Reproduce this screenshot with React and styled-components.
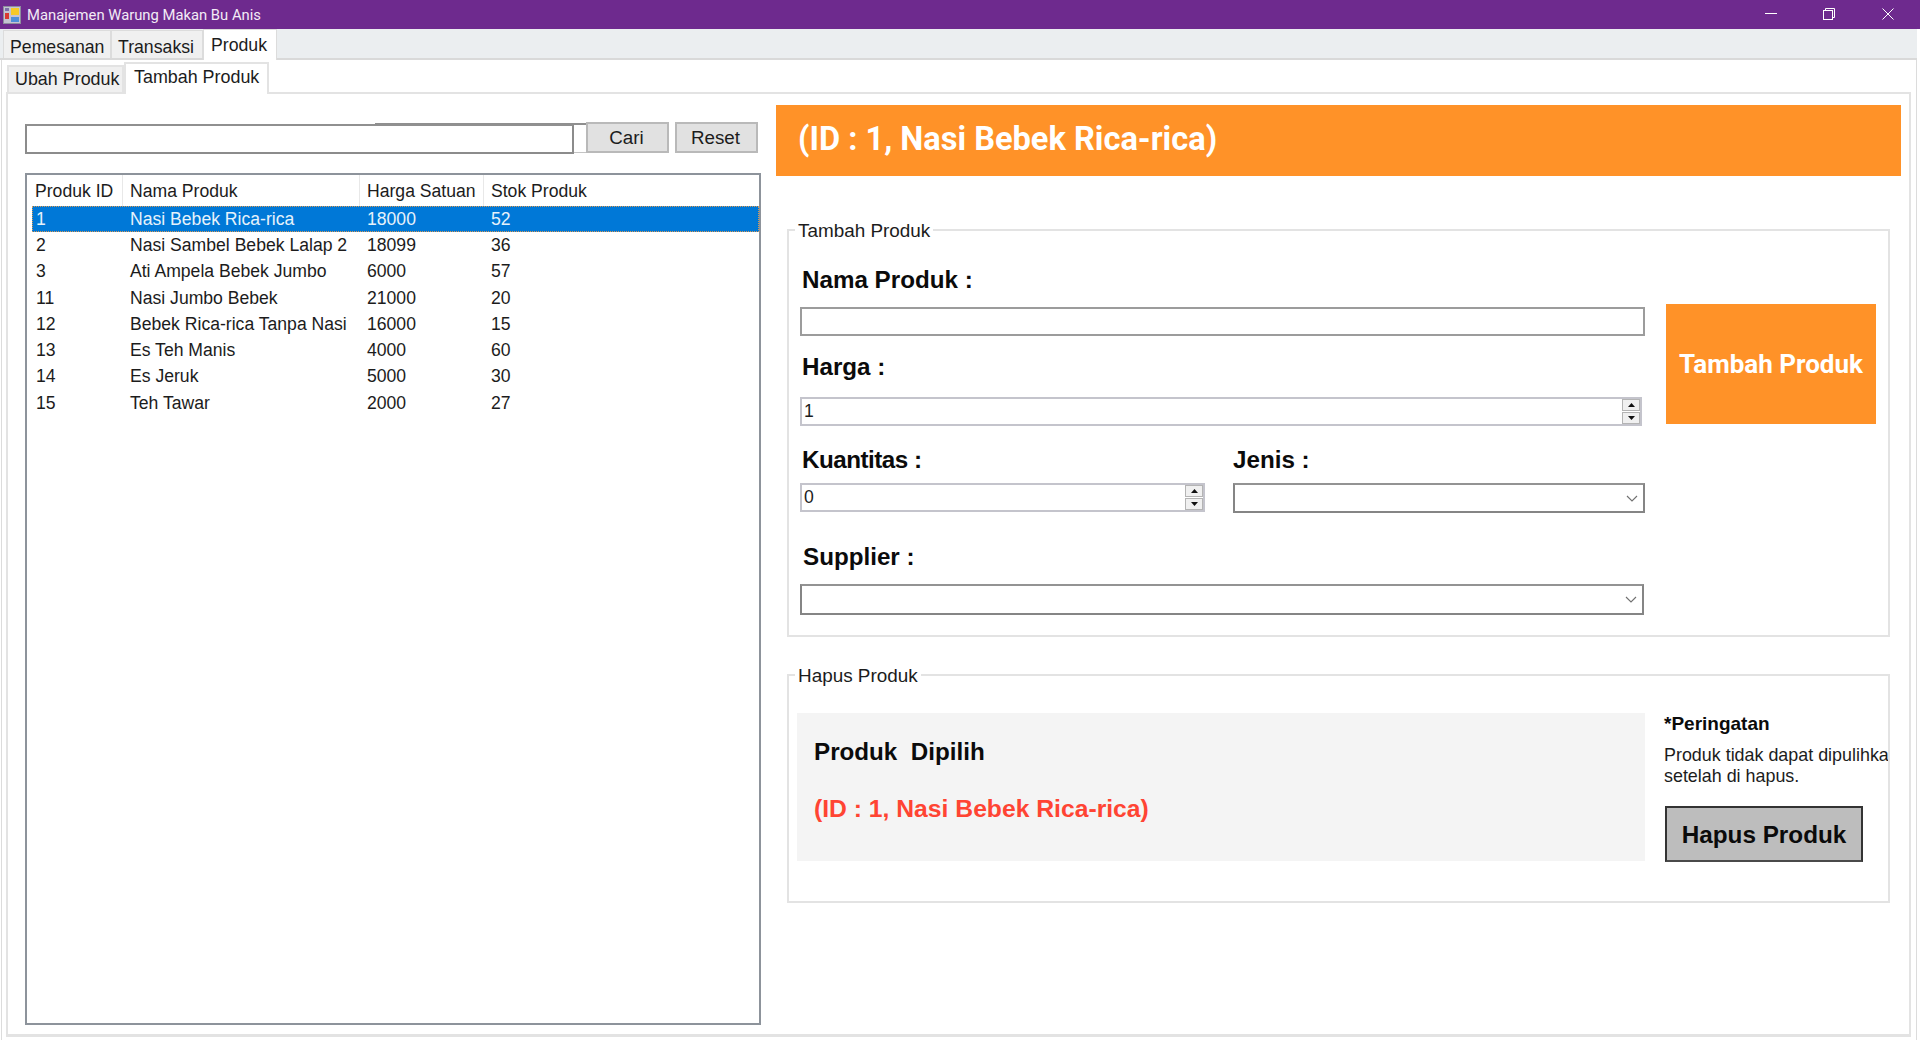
import React from "react";
import styled, { createGlobalStyle } from "styled-components";

const GlobalStyle = createGlobalStyle`
  html, body {
    margin: 0;
    padding: 0;
    background: #fff;
  }
  * {
    box-sizing: border-box;
  }
`;

const products = [
  { id: 1, name: "Nasi Bebek Rica-rica", price: 18000, stock: 52 },
  { id: 2, name: "Nasi Sambel Bebek Lalap 2", price: 18099, stock: 36 },
  { id: 3, name: "Ati Ampela Bebek Jumbo", price: 6000, stock: 57 },
  { id: 11, name: "Nasi Jumbo Bebek", price: 21000, stock: 20 },
  { id: 12, name: "Bebek Rica-rica Tanpa Nasi", price: 16000, stock: 15 },
  { id: 13, name: "Es Teh Manis", price: 4000, stock: 60 },
  { id: 14, name: "Es Jeruk", price: 5000, stock: 30 },
  { id: 15, name: "Teh Tawar", price: 2000, stock: 27 },
];

const Page = styled.div`
  width: 1920px;
  height: 1040px;
  overflow: hidden;
  display: flex;
  flex-direction: column;
  background: #fff;
  font-family: "Liberation Sans", Arial, sans-serif;
  color: #1c1c1c;
`;

const TitleBar = styled.div`
  height: 29px;
  flex: none;
  display: flex;
  align-items: center;
  background: #6e2a8e;
  color: #f3ebf6;
  padding-left: 3px;
`;

const TitleText = styled.span`
  margin-left: 6px;
  font-family: Roboto, sans-serif;
  font-size: 14.8px;
`;

const WindowButtons = styled.div`
  margin-left: auto;
  display: flex;
  align-items: center;
  padding: 0 26px 1px 0;
  height: 100%;
`;

const WindowIcon = styled.span`
  display: flex;
  margin-left: ${(p) => p.$gap || 0}px;
`;

const OuterStrip = styled.div`
  height: 31px;
  flex: none;
  display: flex;
  align-items: flex-end;
  padding-left: 3px;
  background: #ebeef0;
  border-bottom: 2px solid #d9d9d9;
  margin-right: 3px;
`;

const OuterTab = styled.div`
  height: ${(p) => (p.$active ? "31px" : "28px")};
  width: ${(p) => p.$width}px;
  margin-bottom: ${(p) => (p.$active ? "-2px" : "0")};
  padding-top: ${(p) => (p.$active ? "5px" : "6px")};
  padding-left: ${(p) => (p.$active ? "7px" : "6px")};
  background: ${(p) => (p.$active ? "#fff" : "#f0f0f0")};
  border: 1px solid #dcdcdc;
  border-bottom: none;
  font-size: 17.7px;
  line-height: 20px;
  white-space: nowrap;
`;

const OuterPanel = styled.div`
  flex: 1;
  min-height: 0;
  display: flex;
  flex-direction: column;
  margin: 0 3px 0 1px;
  padding: 1px 5px 3px 4px;
  border-left: 1px solid #dcdcdc;
  border-right: 1px solid #dcdcdc;
`;

const InnerStrip = styled.div`
  height: 31px;
  flex: none;
  display: flex;
  align-items: flex-end;
  padding-left: 1px;
`;

const InnerTab = styled.div`
  height: ${(p) => (p.$active ? "32px" : "27px")};
  width: ${(p) => p.$width}px;
  margin-bottom: ${(p) => (p.$active ? "-2px" : "0")};
  padding-top: ${(p) => (p.$active ? "3px" : "2px")};
  padding-left: ${(p) => (p.$active ? "8px" : "6px")};
  background: ${(p) => (p.$active ? "#fff" : "#f0f0f0")};
  border: 2px solid #e3e3e3;
  border-bottom: none;
  position: relative;
  font-size: 17.9px;
  line-height: 20px;
  white-space: nowrap;
`;

const InnerPanel = styled.div`
  flex: 1;
  min-height: 0;
  display: grid;
  grid-template-columns: 736px 1125px;
  column-gap: 15px;
  padding: 11px 0 0 17px;
  border: 2px solid #e3e3e3;
  border-bottom-width: 3px;
`;

const LeftColumn = styled.div`
  padding-top: 17px;
  display: flex;
  flex-direction: column;
`;

const SearchRow = styled.div`
  height: 32px;
  display: flex;
  align-items: flex-start;
  isolation: isolate;
`;

const SearchBox = styled.div`
  position: relative;
  width: 549px;
  height: 30px;
  margin-top: 2px;
  margin-right: 12px;
  background: #fff;
  border: 2px solid #8c8c8c;
  border-top-color: #909090;
`;

const HiddenSearch = styled.div`
  position: absolute;
  left: 348px;
  top: -3px;
  width: 212px;
  height: 30px;
  border: 1px solid #c4c4c4;
  border-top: 2px solid #8f8f8f;
  border-left: none;
  z-index: -1;
`;

const SearchButton = styled.button`
  width: 83px;
  height: 31px;
  margin-right: ${(p) => p.$gap || 0}px;
  padding: 1px 2px 0 0;
  background: #e1e1e1;
  border: 2px solid #b9b9b9;
  font-family: inherit;
  font-size: 18.8px;
  color: #1c1c1c;
`;

const DataGrid = styled.div`
  height: 852px;
  margin-top: 19px;
  background: #fff;
  border: 2px solid #8d939b;
  padding-left: 5px;
`;

const GridRow = styled.div`
  display: grid;
  grid-template-columns: 90px 237px 124px 276px;
  width: 727px;
  height: ${(p) => (p.$header ? "31px" : "26.3px")};
  align-items: center;
  font-size: 17.6px;
  background: ${(p) => (p.$selected ? "#0078d7" : "transparent")};
  color: ${(p) => (p.$selected ? "#e6f2fb" : "inherit")};
  outline: ${(p) => (p.$selected ? "1px dotted #d99a55" : "none")};
  outline-offset: -1px;
`;

const HeaderCell = styled.div`
  height: 100%;
  display: flex;
  align-items: center;
  padding: 1px 0 0 ${(p) => (p.$first ? "3px" : "7px")};
  border-left: ${(p) => (p.$first ? "none" : "1px solid #e8e8e8")};
`;

const Cell = styled.div`
  padding-left: ${(p) => (p.$first ? "4px" : "8px")};
  white-space: nowrap;
`;

const RightColumn = styled.div`
  display: flex;
  flex-direction: column;
`;

const Banner = styled.div`
  height: 71px;
  flex: none;
  display: flex;
  align-items: center;
  padding: 0 0 3px 22px;
  background: #ff9228;
  color: #fff;
  font-family: Roboto, sans-serif;
  font-weight: 700;
  font-size: 32.6px;
`;

const Group = styled.section`
  position: relative;
  flex: none;
  width: 1103px;
  height: ${(p) => p.$height}px;
  margin: ${(p) => p.$top}px 0 0 11px;
  border: 2px solid #e3e3e3;
`;

const GroupLegend = styled.span`
  position: absolute;
  left: 6px;
  top: -11px;
  padding: 0 3px;
  background: #fff;
  font-size: 18.9px;
  line-height: 21px;
`;

const AddLayout = styled.div`
  display: grid;
  grid-template-columns: 845px 210px;
  column-gap: 21px;
  padding: 32px 0 0 11px;
`;

const FieldLabel = styled.div`
  height: 34px;
  margin-top: ${(p) => p.$top || 0}px;
  padding-left: ${(p) => p.$indent ?? 2}px;
  font-size: 24.2px;
  font-weight: 700;
  line-height: 34px;
  letter-spacing: ${(p) => p.$spacing || 0}px;
  color: #0b0b0b;
`;

const TextBox = styled.div`
  height: ${(p) => p.$height || 29}px;
  width: ${(p) => p.$width || 845}px;
  margin-top: ${(p) => p.$top || 0}px;
  background: #fff;
  border: 2px solid #9c9c9c;
`;

const SpinBox = styled.div`
  height: 29px;
  width: ${(p) => p.$width}px;
  margin-top: ${(p) => p.$top || 0}px;
  display: flex;
  align-items: center;
  justify-content: space-between;
  padding-left: 2px;
  background: #fff;
  border: 2px solid #c4c4cc;
  font-size: 17.6px;
`;

const SpinButtons = styled.div`
  display: flex;
  flex-direction: column;
  width: 18px;
  gap: 1px;
`;

const SpinButton = styled.div`
  height: 12px;
  display: flex;
  align-items: center;
  justify-content: center;
  background: #f0f0f0;
  border: 1px solid #b4b4b4;
`;

const ComboBox = styled.div`
  height: ${(p) => p.$height}px;
  width: ${(p) => p.$width}px;
  margin-top: ${(p) => p.$top || 0}px;
  display: flex;
  align-items: center;
  justify-content: flex-end;
  padding-right: 5px;
  background: #fff;
  border: 2px solid #858585;
  border-top-color: #939393;
`;

const TwoFields = styled.div`
  display: grid;
  grid-template-columns: 405px 412px;
  column-gap: 28px;
  margin-top: 17px;
`;

const AddButton = styled.button`
  width: 210px;
  height: 120px;
  margin-top: 41px;
  padding: 0;
  background: #ff9228;
  border: none;
  color: #fff;
  font-family: Roboto, sans-serif;
  font-weight: 700;
  font-size: 26px;
`;

const DeleteLayout = styled.div`
  display: flex;
  padding: 37px 0 0 8px;
  height: 100%;
`;

const SelectedPanel = styled.div`
  width: 848px;
  height: 148px;
  flex: none;
  padding: 22px 0 0 17px;
  background: #f4f4f4;
`;

const SelectedTitle = styled.div`
  font-size: 24.2px;
  font-weight: 700;
  line-height: 34px;
  color: #0b0b0b;
`;

const SelectedName = styled.div`
  margin-top: 23px;
  font-size: 24.7px;
  font-weight: 700;
  line-height: 34px;
  color: #ff4433;
`;

const WarningColumn = styled.div`
  flex: 1;
  min-width: 0;
  overflow: hidden;
  padding: 0 0 0 19px;
`;

const WarningTitle = styled.div`
  font-size: 19px;
  font-weight: 700;
  line-height: 22px;
  color: #0b0b0b;
`;

const WarningText = styled.div`
  margin-top: 10px;
  font-size: 17.9px;
  line-height: 21px;
  white-space: nowrap;
`;

const DeleteButton = styled.button`
  display: block;
  width: 198px;
  height: 56px;
  margin: 19px 0 0 1px;
  padding: 1px 0 0;
  background: #bdbdbd;
  border: 2px solid #333;
  border-bottom-color: #4a4a4a;
  font-family: inherit;
  font-weight: 700;
  font-size: 24.3px;
  color: #0b0b0b;
`;

const AppIcon = () => (
  <svg width="18" height="18" viewBox="0 0 18 18">
    <rect x="0" y="0" width="18" height="18" fill="#8d8d9d" />
    <rect x="1" y="1" width="16" height="16" fill="#c4c4d2" />
    <rect x="2" y="2" width="4" height="3" fill="#7c6fa8" />
    <rect x="2" y="7" width="4" height="6" fill="#d8392f" />
    <rect x="8" y="2" width="8" height="7" fill="#f6c927" />
    <rect x="8" y="11" width="8" height="5" fill="#4f8fd8" />
  </svg>
);

const MinimizeIcon = () => (
  <svg width="12" height="12" viewBox="0 0 12 12">
    <path d="M0 5.5H12" stroke="#fff" strokeWidth="1" />
  </svg>
);

const RestoreIcon = () => (
  <svg width="12" height="12" viewBox="0 0 12 12" fill="none">
    <rect x="0.5" y="2.5" width="9" height="9" stroke="#fff" />
    <path d="M2.5 2.5V0.5H11.5V9.5H9.5" stroke="#fff" />
  </svg>
);

const CloseIcon = () => (
  <svg width="12" height="12" viewBox="0 0 12 12">
    <path d="M0.5 0.5L11.5 11.5M11.5 0.5L0.5 11.5" stroke="#fff" strokeWidth="1" />
  </svg>
);

const Arrow = ({ down }) => (
  <svg width="7" height="4" viewBox="0 0 7 4">
    <path d={down ? "M0 0H7L3.5 4Z" : "M3.5 0L7 4H0Z"} fill="#111" />
  </svg>
);

const Chevron = () => (
  <svg width="12" height="7" viewBox="0 0 12 7" fill="none">
    <path d="M1 1L6 6L11 1" stroke="#707070" strokeWidth="1.1" />
  </svg>
);

const Spin = ({ value, width, top }) => (
  <SpinBox $width={width} $top={top}>
    <span>{value}</span>
    <SpinButtons>
      <SpinButton>
        <Arrow />
      </SpinButton>
      <SpinButton>
        <Arrow down />
      </SpinButton>
    </SpinButtons>
  </SpinBox>
);

const App = () => {
  return (
    <Page>
      <GlobalStyle />
      <TitleBar>
        <AppIcon />
        <TitleText>Manajemen Warung Makan Bu Anis</TitleText>
        <WindowButtons>
          <WindowIcon>
            <MinimizeIcon />
          </WindowIcon>
          <WindowIcon $gap={46}>
            <RestoreIcon />
          </WindowIcon>
          <WindowIcon $gap={47}>
            <CloseIcon />
          </WindowIcon>
        </WindowButtons>
      </TitleBar>

      <OuterStrip>
        <OuterTab $width={108}>Pemesanan</OuterTab>
        <OuterTab $width={92}>Transaksi</OuterTab>
        <OuterTab $width={74} $active>
          Produk
        </OuterTab>
      </OuterStrip>

      <OuterPanel>
        <InnerStrip>
          <InnerTab $width={117}>Ubah Produk</InnerTab>
          <InnerTab $width={145} $active>
            Tambah Produk
          </InnerTab>
        </InnerStrip>

        <InnerPanel>
          <LeftColumn>
            <SearchRow>
              <SearchBox>
                <HiddenSearch />
              </SearchBox>
              <SearchButton $gap={6}>Cari</SearchButton>
              <SearchButton>Reset</SearchButton>
            </SearchRow>

            <DataGrid>
              <GridRow $header>
                <HeaderCell $first>Produk ID</HeaderCell>
                <HeaderCell>Nama Produk</HeaderCell>
                <HeaderCell>Harga Satuan</HeaderCell>
                <HeaderCell>Stok Produk</HeaderCell>
              </GridRow>
              {products.map((item, index) => (
                <GridRow key={item.id} $selected={index === 0}>
                  <Cell $first>{item.id}</Cell>
                  <Cell>{item.name}</Cell>
                  <Cell>{item.price}</Cell>
                  <Cell>{item.stock}</Cell>
                </GridRow>
              ))}
            </DataGrid>
          </LeftColumn>

          <RightColumn>
            <Banner>(ID : 1, Nasi Bebek Rica-rica)</Banner>

            <Group $top={53} $height={408}>
              <GroupLegend>Tambah Produk</GroupLegend>
              <AddLayout>
                <div>
                  <FieldLabel>Nama Produk :</FieldLabel>
                  <TextBox $top={10} />
                  <FieldLabel $top={14}>Harga :</FieldLabel>
                  <Spin value="1" width={842} top={13} />
                  <TwoFields>
                    <div>
                      <FieldLabel $spacing={-0.5}>Kuantitas :</FieldLabel>
                      <Spin value="0" width={405} top={6} />
                    </div>
                    <div>
                      <FieldLabel $indent={0}>Jenis :</FieldLabel>
                      <ComboBox $width={412} $height={30} $top={6}>
                        <Chevron />
                      </ComboBox>
                    </div>
                  </TwoFields>
                  <FieldLabel $top={27} $indent={3}>
                    Supplier :
                  </FieldLabel>
                  <ComboBox $width={844} $height={31} $top={10}>
                    <Chevron />
                  </ComboBox>
                </div>
                <AddButton>Tambah Produk</AddButton>
              </AddLayout>
            </Group>

            <Group $top={37} $height={229}>
              <GroupLegend>Hapus Produk</GroupLegend>
              <DeleteLayout>
                <SelectedPanel>
                  <SelectedTitle>Produk&nbsp; Dipilih</SelectedTitle>
                  <SelectedName>(ID : 1, Nasi Bebek Rica-rica)</SelectedName>
                </SelectedPanel>
                <WarningColumn>
                  <WarningTitle>*Peringatan</WarningTitle>
                  <WarningText>
                    Produk tidak dapat dipulihkan
                    <br />
                    setelah di hapus.
                  </WarningText>
                  <DeleteButton>Hapus Produk</DeleteButton>
                </WarningColumn>
              </DeleteLayout>
            </Group>
          </RightColumn>
        </InnerPanel>
      </OuterPanel>
    </Page>
  );
};

export default App;
